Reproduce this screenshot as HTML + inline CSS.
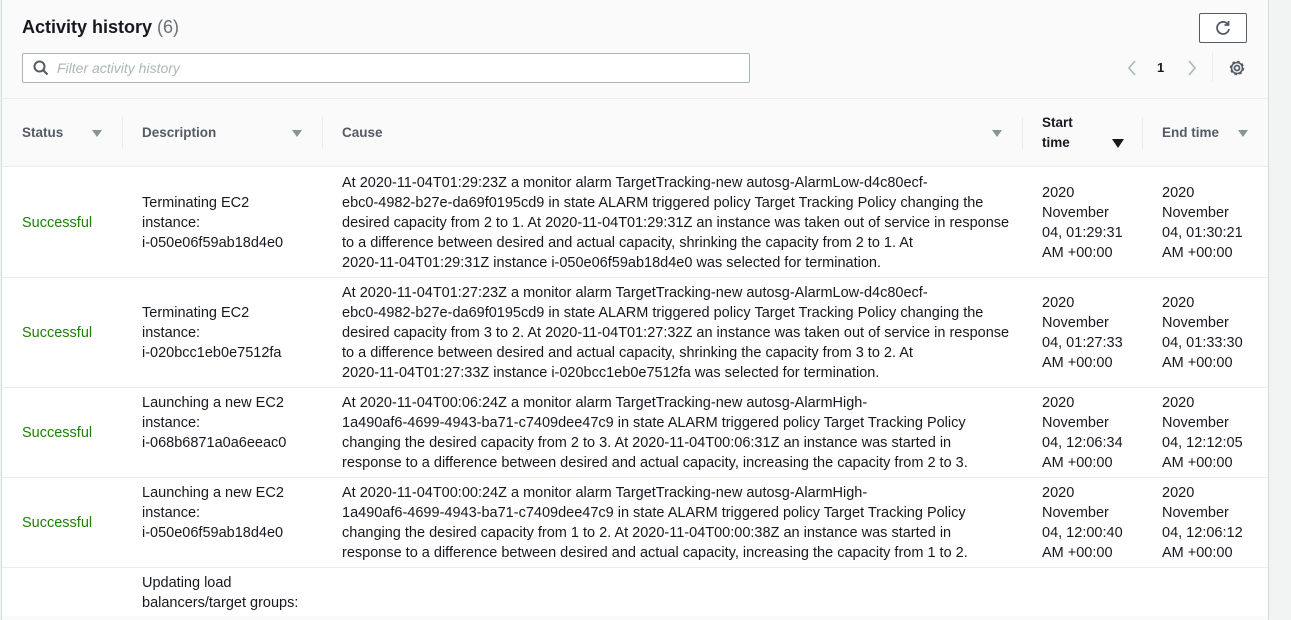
<!DOCTYPE html>
<html><head><meta charset="utf-8"><style>
body{margin:0;width:1291px;height:608px;overflow:hidden;background:#f2f3f3;font-family:"Liberation Sans",sans-serif;color:#16191f;position:relative}
.card{position:absolute;left:1px;top:0;width:1266px;height:620px;background:#fafafa;border-left:1px solid #d5dbdb;border-right:1px solid #d5dbdb}
.a{position:absolute;white-space:nowrap}
h1{position:absolute;left:20px;top:17px;margin:0;font-size:18px;font-weight:bold;color:#16191f}
h1 span{font-weight:normal;color:#687078}
.search{position:absolute;left:20px;top:53px;width:726px;height:28px;border:1px solid #aab7b8;border-radius:2px;background:#fff}
.search i{position:absolute;left:34px;top:6px;font-size:14px;color:#aab7b8;font-style:italic}
.btn{position:absolute;left:1197px;top:13px;width:46px;height:28px;border:1px solid #545b64;border-radius:2px;background:#fff}
.hr{position:absolute;left:0;width:1266px;height:1px;background:#eaeded}
.th{position:absolute;font-size:13.5px;font-weight:bold;color:#545b64;line-height:20px}
.sep{position:absolute;top:117px;width:1px;height:32px;background:#eaeded}
.tri{position:absolute;width:0;height:0;border-left:5px solid transparent;border-right:5px solid transparent;border-top:7px solid #879596}
.body{position:absolute;left:0;top:166px;width:1266px;height:450px;background:#fff}
.c{position:absolute;font-size:14.5px;line-height:20px;white-space:nowrap;color:#16191f}
.ok{color:#1d8102}
</style></head><body>
<div class="card">
<h1>Activity history <span>(6)</span></h1>
<div class="search"><svg style="position:absolute;left:10px;top:6px" width="16" height="16" viewBox="0 0 16 16"><circle cx="6.5" cy="6.5" r="5" fill="none" stroke="#545b64" stroke-width="2"/><line x1="10" y1="10" x2="14.5" y2="14.5" stroke="#545b64" stroke-width="2"/></svg><i>Filter activity history</i></div>
<div class="btn"><svg style="position:absolute;left:15px;top:6px" width="16" height="16" viewBox="0 0 16 16"><path d="M13 4.5A6 6 0 1 0 14 9" fill="none" stroke="#545b64" stroke-width="1.8"/><path d="M13.5 1v4h-4" fill="none" stroke="#545b64" stroke-width="1.8"/></svg></div>
<svg class="a" style="left:1124px;top:60px" width="12" height="16" viewBox="0 0 12 16"><path d="M9 1L3 8l6 7" fill="none" stroke="#aab7b8" stroke-width="1.6"/></svg>
<div class="a" style="left:1155px;top:60px;font-size:13px;font-weight:bold">1</div>
<svg class="a" style="left:1184px;top:60px" width="12" height="16" viewBox="0 0 12 16"><path d="M3 1l6 7-6 7" fill="none" stroke="#aab7b8" stroke-width="1.6"/></svg>
<div class="a" style="left:1210px;top:52px;width:1px;height:30px;background:#eaeded"></div>
<svg class="a" style="left:1226px;top:59px" width="18" height="18" viewBox="0 0 18 18"><circle cx="9" cy="9" r="2.5" fill="none" stroke="#545b64" stroke-width="1.8"/><circle cx="9" cy="9" r="6" fill="none" stroke="#545b64" stroke-width="2.4" stroke-dasharray="2.4 2.3"/><circle cx="9" cy="9" r="5.5" fill="none" stroke="#545b64" stroke-width="1.6"/></svg>
<div class="hr" style="top:98px"></div>
<div class="th" style="left:20px;top:123px">Status</div><div class="tri" style="left:90px;top:130px"></div>
<div class="sep" style="left:120px"></div>
<div class="th" style="left:140px;top:123px">Description</div><div class="tri" style="left:290px;top:130px"></div>
<div class="sep" style="left:320px"></div>
<div class="th" style="left:340px;top:123px">Cause</div><div class="tri" style="left:990px;top:130px"></div>
<div class="sep" style="left:1020px"></div>
<div class="th" style="left:1040px;top:113px;color:#16191f">Start<br>time</div><div class="tri" style="left:1110px;top:139px;border-top-color:#16191f;border-left-width:6px;border-right-width:6px;border-top-width:9px"></div>
<div class="sep" style="left:1140px"></div>
<div class="th" style="left:1160px;top:123px">End time</div><div class="tri" style="left:1236px;top:130px"></div>
<div class="body">
<div class="hr" style="top:0"></div>
<div class="c ok" style="left:20px;top:47px">Successful</div>
<div class="c" style="left:140px;top:27px">Terminating EC2<br>instance:<br>i-050e06f59ab18d4e0</div>
<div class="c" style="left:340px;top:7px">At 2020-11-04T01:29:23Z a monitor alarm TargetTracking-new autosg-AlarmLow-d4c80ecf-<br>ebc0-4982-b27e-da69f0195cd9 in state ALARM triggered policy Target Tracking Policy changing the<br>desired capacity from 2 to 1. At 2020-11-04T01:29:31Z an instance was taken out of service in response<br>to a difference between desired and actual capacity, shrinking the capacity from 2 to 1. At<br>2020-11-04T01:29:31Z instance i-050e06f59ab18d4e0 was selected for termination.</div>
<div class="c" style="left:1040px;top:17px">2020<br>November<br>04, 01:29:31<br>AM +00:00</div>
<div class="c" style="left:1160px;top:17px">2020<br>November<br>04, 01:30:21<br>AM +00:00</div>
<div class="hr" style="top:111px"></div>
<div class="c ok" style="left:20px;top:157px">Successful</div>
<div class="c" style="left:140px;top:137px">Terminating EC2<br>instance:<br>i-020bcc1eb0e7512fa</div>
<div class="c" style="left:340px;top:117px">At 2020-11-04T01:27:23Z a monitor alarm TargetTracking-new autosg-AlarmLow-d4c80ecf-<br>ebc0-4982-b27e-da69f0195cd9 in state ALARM triggered policy Target Tracking Policy changing the<br>desired capacity from 3 to 2. At 2020-11-04T01:27:32Z an instance was taken out of service in response<br>to a difference between desired and actual capacity, shrinking the capacity from 3 to 2. At<br>2020-11-04T01:27:33Z instance i-020bcc1eb0e7512fa was selected for termination.</div>
<div class="c" style="left:1040px;top:127px">2020<br>November<br>04, 01:27:33<br>AM +00:00</div>
<div class="c" style="left:1160px;top:127px">2020<br>November<br>04, 01:33:30<br>AM +00:00</div>
<div class="hr" style="top:221px"></div>
<div class="c ok" style="left:20px;top:257px">Successful</div>
<div class="c" style="left:140px;top:227px">Launching a new EC2<br>instance:<br>i-068b6871a0a6eeac0</div>
<div class="c" style="left:340px;top:227px">At 2020-11-04T00:06:24Z a monitor alarm TargetTracking-new autosg-AlarmHigh-<br>1a490af6-4699-4943-ba71-c7409dee47c9 in state ALARM triggered policy Target Tracking Policy<br>changing the desired capacity from 2 to 3. At 2020-11-04T00:06:31Z an instance was started in<br>response to a difference between desired and actual capacity, increasing the capacity from 2 to 3.</div>
<div class="c" style="left:1040px;top:227px">2020<br>November<br>04, 12:06:34<br>AM +00:00</div>
<div class="c" style="left:1160px;top:227px">2020<br>November<br>04, 12:12:05<br>AM +00:00</div>
<div class="hr" style="top:311px"></div>
<div class="c ok" style="left:20px;top:347px">Successful</div>
<div class="c" style="left:140px;top:317px">Launching a new EC2<br>instance:<br>i-050e06f59ab18d4e0</div>
<div class="c" style="left:340px;top:317px">At 2020-11-04T00:00:24Z a monitor alarm TargetTracking-new autosg-AlarmHigh-<br>1a490af6-4699-4943-ba71-c7409dee47c9 in state ALARM triggered policy Target Tracking Policy<br>changing the desired capacity from 1 to 2. At 2020-11-04T00:00:38Z an instance was started in<br>response to a difference between desired and actual capacity, increasing the capacity from 1 to 2.</div>
<div class="c" style="left:1040px;top:317px">2020<br>November<br>04, 12:00:40<br>AM +00:00</div>
<div class="c" style="left:1160px;top:317px">2020<br>November<br>04, 12:06:12<br>AM +00:00</div>
<div class="hr" style="top:401px"></div>
<div class="c" style="left:140px;top:407px">Updating load<br>balancers/target groups:</div>
</div>
</div>
</body></html>
